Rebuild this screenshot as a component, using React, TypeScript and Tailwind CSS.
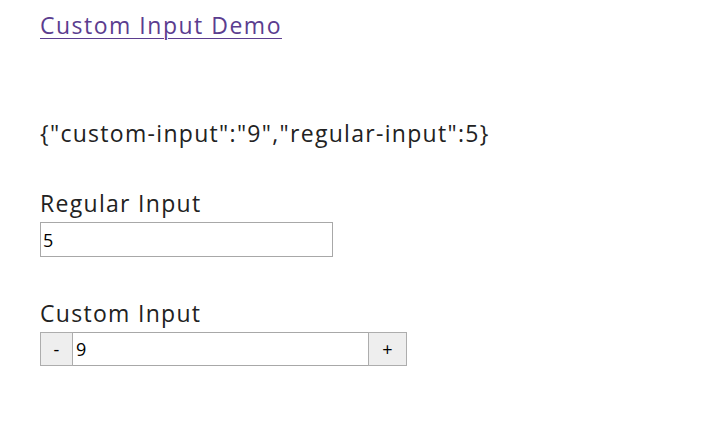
import React, { useState } from 'react';

const App = () => {
  const [regular, setRegular] = useState('5');
  const [custom, setCustom] = useState('9');

  const state = { 'custom-input': custom, 'regular-input': Number(regular) };

  return (
    <div className="min-h-screen bg-white pl-[40px] pt-[11px] text-[23px] leading-[28px] tracking-[1.3px] text-[#222] font-['Open_Sans',sans-serif]">
      <a href="#" className="text-[#5b3d8f] underline underline-offset-[4px] decoration-1 tracking-[1.5px]">
        Custom Input Demo
      </a>

      <p className="mt-[80px]">{JSON.stringify(state)}</p>

      {/* Regular input */}
      <div className="mt-[42px]">
        <label className="block">Regular Input</label>
        <input
          value={regular}
          onChange={(e) => setRegular(e.target.value)}
          className="mt-[5px] block w-[293px] h-[35px] border border-[#a8a8a8] px-[2px] text-[18px] tracking-normal text-black outline-none"
        />
      </div>

      {/* Custom input */}
      <div className="mt-[42px]">
        <label className="block">Custom Input</label>
        <div className="mt-[5px] flex h-[34px] tracking-normal">
          <button
            onClick={() => setCustom(String(Number(custom) - 1))}
            className="w-[33px] border border-[#adadad] bg-[#eeeeee] text-[18px] text-black"
          >
            -
          </button>
          <input
            value={custom}
            onChange={(e) => setCustom(e.target.value)}
            className="w-[295px] border-y border-[#a8a8a8] px-[3px] text-[18px] text-black outline-none"
          />
          <button
            onClick={() => setCustom(String(Number(custom) + 1))}
            className="w-[39px] border border-[#adadad] bg-[#eeeeee] text-[18px] text-black"
          >
            +
          </button>
        </div>
      </div>
    </div>
  );
};

export default App;
